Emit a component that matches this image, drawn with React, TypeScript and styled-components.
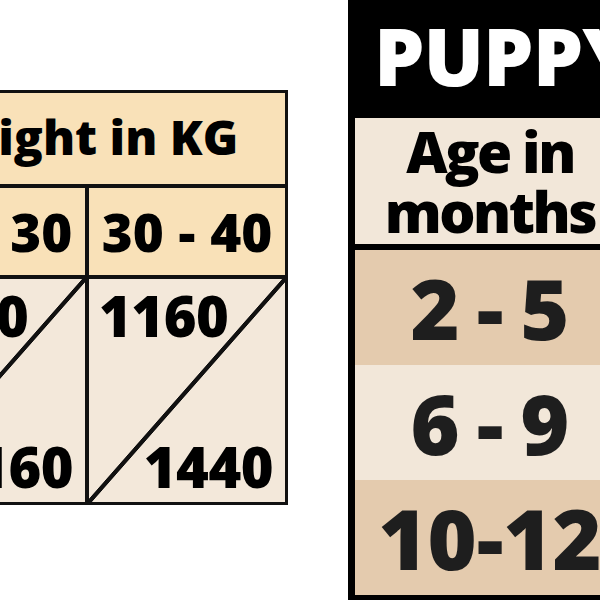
import styled, { createGlobalStyle } from 'styled-components';

const GlobalStyle = createGlobalStyle`
  body {
    margin: 0;
    background: #ffffff;
    overflow: hidden;
  }
`;

const Page = styled.div`
  display: flex;
  align-items: flex-start;
  width: 600px;
  height: 600px;
  overflow: hidden;
  background: #ffffff;
  font-family: 'Open Sans', sans-serif;
  font-weight: 800;
`;

// weight table, bleeds off the left edge
const WeightTable = styled.div`
  flex: none;
  box-sizing: border-box;
  width: 402px;
  margin: 90px 0 0 -114px;
  display: grid;
  grid-template-columns: 200px 196px;
  border: 3px solid #111;
  color: #000;
`;

const WeightTitle = styled.div`
  grid-column: 1 / 3;
  height: 95px;
  display: flex;
  align-items: center;
  justify-content: center;
  padding: 0 17px 4px 0;
  box-sizing: border-box;
  background: #f9e1b8;
  border-bottom: 4px solid #111;
  font-size: 48px;
  white-space: nowrap;
`;

const RangeCell = styled.div<{ $divider?: boolean }>`
  height: 87px;
  display: flex;
  align-items: center;
  justify-content: center;
  background: #f9e1b8;
  border-right: ${(p) => (p.$divider ? '4px solid #111' : 'none')};
  border-bottom: 4px solid #111;
  font-size: 53px;
  word-spacing: 1px;
  white-space: nowrap;
`;

const SplitCell = styled.div<{ $divider?: boolean }>`
  height: 223px;
  display: flex;
  flex-direction: column;
  justify-content: space-between;
  padding: 4px 12px 4px 10px;
  box-sizing: border-box;
  border-right: ${(p) => (p.$divider ? '4px solid #111' : 'none')};
  background:
    linear-gradient(
      to top left,
      transparent calc(50% - 2.5px),
      #111 calc(50% - 1.8px),
      #111 calc(50% + 1.8px),
      transparent calc(50% + 2.5px)
    ),
    #f3e8da;
  font-size: 56px;
  line-height: 64px;
  letter-spacing: -0.5px;
`;

const TopValue = styled.span`
  align-self: flex-start;
`;

const BottomValue = styled.span`
  align-self: flex-end;
`;

// puppy table, bleeds off the right edge
const PuppyTable = styled.div`
  flex: none;
  box-sizing: border-box;
  width: 284px;
  height: 600px;
  margin-left: 60px;
  display: flex;
  flex-direction: column;
  border: 7px solid #000;
  border-top: 0;
  border-bottom-width: 8px;
  background: #000;
`;

const PuppyTitle = styled.div`
  height: 118px;
  flex: none;
  box-sizing: border-box;
  display: flex;
  align-items: center;
  justify-content: flex-start;
  padding: 0 0 10px 19px;
  color: #fff;
  font-size: 80px;
  letter-spacing: -1px;
  white-space: nowrap;
`;

const AgeHeader = styled.div`
  height: 126px;
  flex: none;
  display: flex;
  align-items: center;
  justify-content: center;
  text-align: center;
  background: #f2e7d9;
  border-bottom: 6px solid #000;
  font-size: 57px;
  line-height: 60px;
  letter-spacing: -2.5px;
  color: #000;
`;

const AgeRow = styled.div<{ $dark?: boolean }>`
  flex: 1;
  display: flex;
  align-items: center;
  justify-content: center;
  white-space: nowrap;
  background: ${(p) => (p.$dark ? '#e4cbae' : '#f2e7d9')};
  font-size: 84px;
  word-spacing: -5px;
  color: #1e1e1e;
`;

export default function App() {
  return (
    <Page>
      <GlobalStyle />
      <WeightTable>
        <WeightTitle>Weight in KG</WeightTitle>
        <RangeCell $divider>20 - 30</RangeCell>
        <RangeCell>30 - 40</RangeCell>
        <SplitCell $divider>
          <TopValue>1000</TopValue>
          <BottomValue>1160</BottomValue>
        </SplitCell>
        <SplitCell>
          <TopValue>1160</TopValue>
          <BottomValue>1440</BottomValue>
        </SplitCell>
      </WeightTable>
      <PuppyTable>
        <PuppyTitle>PUPPY</PuppyTitle>
        <AgeHeader>
          Age in
          <br />
          months
        </AgeHeader>
        <AgeRow $dark>2 - 5</AgeRow>
        <AgeRow>6 - 9</AgeRow>
        <AgeRow $dark>10-12</AgeRow>
      </PuppyTable>
    </Page>
  );
}
